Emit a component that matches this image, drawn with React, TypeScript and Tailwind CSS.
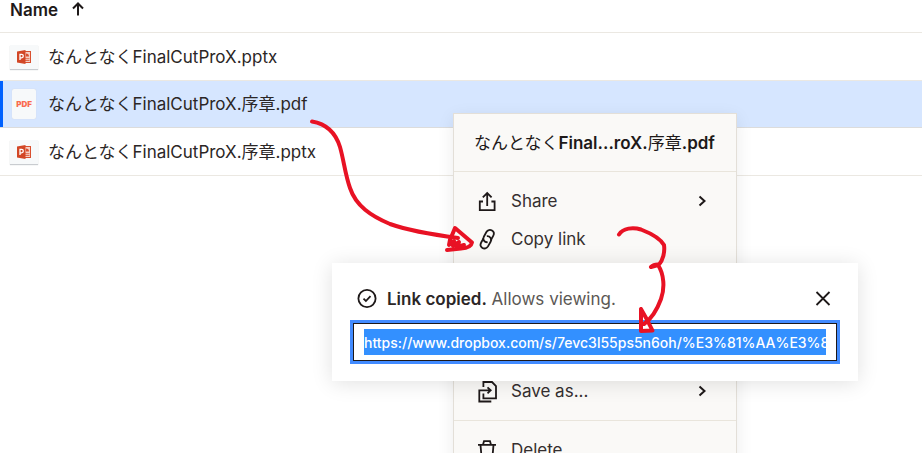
import type { ReactNode } from 'react';

const files = [
  { name: 'なんとなくFinalCutProX.pptx', type: 'pptx', selected: false },
  { name: 'なんとなくFinalCutProX.序章.pdf', type: 'pdf', selected: true },
  { name: 'なんとなくFinalCutProX.序章.pptx', type: 'pptx', selected: false },
];

function PptxIcon() {
  return (
    <span className="flex h-6 w-7 items-center justify-center bg-[#f7f9fa] shadow-[0_1px_1px_#c9ccd0]">
      <svg width="16" height="16" viewBox="0 0 16 16" aria-hidden="true">
        <rect x="8" y="2.5" width="6.5" height="11" fill="#f6cfc4" stroke="#d9502f" />
        <path d="M10 7.5V4.5A3 3 0 0 1 13 7.5z" fill="#d9502f" />
        <path d="M9 9.7h4.5M9 11.5h4.5" stroke="#e06a4c" />
        <path d="M1 2.6L9.5 1v14L1 13.4z" fill="#d24726" />
        <path d="M4 11V5.4h1.6a1.7 1.7 0 0 1 0 3.4H4" fill="none" stroke="#fff" strokeWidth="1.3" />
      </svg>
    </span>
  );
}

function PdfIcon() {
  return (
    <span className="flex h-[30px] w-6 items-center justify-center rounded-xs bg-[#f7f9fa] text-[8px] font-black text-[#fa6b50] shadow-[0_0_1px_#c9ccd0]">
      PDF
    </span>
  );
}

function Icon({ children }: { children: ReactNode }) {
  return (
    <svg
      className="shrink-0"
      width="24"
      height="24"
      viewBox="0 0 24 24"
      fill="none"
      stroke="currentColor"
      strokeWidth="1.8"
      aria-hidden="true"
    >
      {children}
    </svg>
  );
}

function MenuItem({ icon, label, more }: { icon: ReactNode; label: string; more?: boolean }) {
  return (
    <li>
      <button className="flex h-[38px] w-full items-center gap-3 pr-[22px] pl-[21px] text-left">
        <Icon>{icon}</Icon>
        <span className="flex-1 text-[#352f2f]">{label}</span>
        {more && (
          <Icon>
            <path d="M9.5 7.5l5 4.5-5 4.5" strokeWidth="2" />
          </Icon>
        )}
      </button>
    </li>
  );
}

function ContextMenu() {
  return (
    <div className="absolute top-[113px] left-[453px] w-[284px] border border-[#e3dfd8] bg-[#faf9f7] shadow-[0_4px_16px_rgba(0,0,0,0.08)]">
      <h2 className="flex h-[58px] items-center border-b border-[#e9e5dc] px-5 font-semibold whitespace-nowrap">
        <span className="font-normal">なんとなく</span>Final...roX.
        <span className="font-normal">序章</span>.pdf
      </h2>
      <ul className="flex flex-col pt-[10px]">
        <MenuItem
          label="Share"
          more
          icon={<path d="M8 12.5H4.8v8.6h14.8v-8.6h-3.2M12.2 17V4.2M7.8 8.4L12.2 4l4.4 4.4" />}
        />
        <MenuItem
          label="Copy link"
          icon={
            <>
              <path d="M12.6 15.2C9.5 15.5 7.2 12.6 8.8 9.7L11.4 5C12.7 2.8 15.2 2.4 17 3.5C18.9 4.7 19.3 6.9 18.2 8.9L15.9 13" />
              <path d="M11.8 9.2C14.9 8.9 17.2 11.8 15.6 14.7L13 19.4C11.7 21.6 9.2 22 7.4 20.9C5.5 19.7 5.1 17.5 6.2 15.5L8.5 11.4" />
            </>
          }
        />
      </ul>
      <ul className="mt-[114px] border-b border-[#e9e5dc] pb-[10px]">
        <MenuItem
          label="Save as..."
          more
          icon={
            <>
              <path d="M8.4 8V3H17l4 4v12.400H8.400V14.500" />
              <path d="M15.500 11.300H4.300v11.200h12M12.500 8.300l3.200 3-3.200 3" />
            </>
          }
        />
      </ul>
      <ul className="py-[10px]">
        <MenuItem
          label="Delete"
          icon={<path d="M3 6.800h18M8 6.800l1-3.600h6l1 3.600M5.500 6.800l1.200 14.200h10.600l1.200-14.200" />}
        />
      </ul>
    </div>
  );
}

function LinkCopied() {
  return (
    <div
      role="dialog"
      aria-labelledby="copied"
      className="absolute top-[263px] left-[332px] w-[526px] bg-white px-[21px] pt-6 pb-5 shadow-[0_2px_20px_rgba(0,0,0,0.12)]"
    >
      <div className="flex h-6 items-center gap-2 pl-0.5">
        <Icon>
          <circle cx="12" cy="11.5" r="8.600" />
          <path d="M8.500 11.700l2.400 2.300 4.600-4.800" />
        </Icon>
        <label id="copied" htmlFor="link" className="flex-1 text-[#5b5855]">
          <strong className="font-semibold text-[#2b2626]">Link copied.</strong> Allows viewing.
        </label>
        <button aria-label="Close">
          <Icon>
            <path d="M3.500 5l13 13M16.500 5l-13 13" />
          </Icon>
        </button>
      </div>
      <div className="mt-3 flex h-[38px] items-center border border-[#1e1919] bg-white px-[10px] outline-[3px] outline-[#428bff]">
        <input
          id="link"
          readOnly
          className="h-[26px] w-full bg-[#3390ff] text-[14px] font-medium text-white outline-none"
          defaultValue="https://www.dropbox.com/s/7evc3l55ps5n6oh/%E3%81%AA%E3%82%93"
        />
      </div>
    </div>
  );
}

function PenMarks() {
  return (
    <svg
      className="pointer-events-none absolute top-0 left-0"
      width="700"
      height="340"
      fill="none"
      stroke="#e81224"
      strokeWidth="4"
      strokeLinecap="round"
      strokeLinejoin="round"
      aria-hidden="true"
    >
      <path d="M312 121.500C327 124 336 134 340 147C344 161 345 174 350 188C356 206 371 216 390 224C410 231 435 235 458 238" />
      <path d="M450 240L455 228L472 242.500Q471 248 461 248.500L447 250" />
      <path d="M450 240L449 245L454 241L453 246L459 242L457 247L464 245" />
      <path d="M619 234.500C623 228 633 227 641 229.500C650 233 660 238 664 245C665 252 663 260 659 264.500Q654 264 651 267L658 265C664 274 665 288 661 299C657 310 651 319 644 324" />
      <path d="M641 309V331L652.500 330.500Q647 319 641 309" />
    </svg>
  );
}

export default function App() {
  return (
    <main className="relative h-screen overflow-hidden bg-white font-['Inter','Noto_Sans_CJK_JP',sans-serif] text-[17px] leading-6 text-[#1e1919]">
      <table className="w-full border-collapse">
        <thead>
          <tr className="border-b border-[#ebe8e2]">
            <th className="h-8 pb-3 pl-[10px] text-left font-semibold">
              <span className="flex h-5 items-center gap-2">
                Name
                <Icon>
                  <path d="M12 17.500V6M7 10.500L12 5.500l5 5" strokeWidth="2" />
                </Icon>
              </span>
            </th>
          </tr>
        </thead>
        <tbody>
          {files.map((file) => (
            <tr
              key={file.name}
              className={file.selected ? 'border-b border-[#dcdcdc] bg-[#d6e6ff]' : 'border-b border-[#ebe8e2]'}
            >
              <td className={file.selected ? 'h-[47px] shadow-[inset_3px_0_0_#0061fe]' : 'h-12'}>
                <a href="#" className="flex items-center gap-[10px] pl-[10px] text-[#2b2626]">
                  <span className="flex w-7 justify-center">
                    {file.type === 'pdf' ? <PdfIcon /> : <PptxIcon />}
                  </span>
                  {file.name}
                </a>
              </td>
            </tr>
          ))}
        </tbody>
      </table>
      <ContextMenu />
      <LinkCopied />
      <PenMarks />
    </main>
  );
}
